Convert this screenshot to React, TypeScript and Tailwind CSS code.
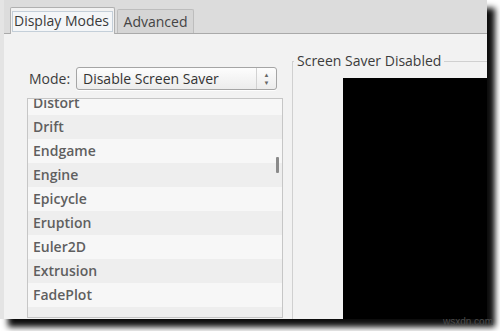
import React from 'react'

const modes = ['Distort', 'Drift', 'Endgame', 'Engine', 'Epicycle', 'Eruption', 'Euler2D', 'Extrusion', 'FadePlot', '']

const App = () => {
  return (
    <div className="relative w-[500px] h-[331px] overflow-hidden bg-white" style={{ fontFamily: '"Open Sans", "Noto Sans", sans-serif' }}>
      <div className="flex flex-col w-[487px] h-[319px] bg-[#f2f2f2] shadow-[8px_8px_6px_rgba(0,0,0,0.95)] border-l-[4px] border-l-[#e4e4e4]">
        {/* tab strip */}
        <div className="flex items-end h-[34px] shrink-0 bg-[#dcdcdc] border-b border-[#aaaaaa] pl-[6px]">
          <div className="relative -mb-px flex items-center h-[27px] w-[105px] px-[1px] bg-[#f2f2f2] border border-b-0 border-[#b0b0b0] rounded-t-[2px]">
            <div className="flex items-center h-[21px] w-full border border-[#c4cfd9] bg-[#f4f6f8] px-[1px] text-[14px] text-[#3a3a3a] leading-none">
              Display Modes
            </div>
          </div>
          <div className="flex items-center justify-center h-[24px] w-[77px] ml-[2px] bg-[#d5d5d5] border border-b-0 border-[#bdbdbd] rounded-t-[2px] text-[14px] text-[#444] leading-none">
            Advanced
          </div>
        </div>

        <div className="flex flex-1 min-h-0">
          {/* left column */}
          <div className="flex flex-col w-[283px] pl-[23px] pt-[33px]">
            <div className="flex items-center h-[23px]">
              <span className="w-[49px] pl-[2px] text-[14px] text-[#3c3c3c]">Mode:</span>
              <div className="flex h-[23px] w-[201px] border border-[#a5a5a5] rounded-[3px] bg-gradient-to-b from-[#fdfdfd] to-[#ececec] shadow-[0_1px_0_rgba(255,255,255,0.8)]">
                <span className="flex-1 pl-[6px] text-[14px] leading-[21px] text-[#333]">Disable Screen Saver</span>
                <div className="flex flex-col items-center justify-center gap-[2px] w-[20px] border-l border-[#d2d2d2] text-[6px] leading-[6px] text-[#666]">
                  <span>▲</span>
                  <span>▼</span>
                </div>
              </div>
            </div>

            <div className="relative flex-1 mt-[8px] mb-[1px] w-[256px] overflow-hidden border border-[#c6c6c6] bg-white">
              <div className="-mt-[8px]">
                {modes.map((m, i) => (
                  <div
                    key={i}
                    className={`h-[24px] pl-[5px] text-[14px] font-semibold leading-[24px] text-[#5f5f5f] ${i % 2 === 1 ? 'bg-[#eeeeee]' : 'bg-[#f7f7f7]'}`}
                  >
                    {m}
                  </div>
                ))}
              </div>
              {/* scrollbar thumb */}
              <div className="absolute right-[3px] top-[58px] w-[3px] h-[16px] bg-[#8a8a8a] rounded-[1px]" />
            </div>
          </div>

          {/* right frame */}
          <div className="flex-1 flex flex-col pl-[5px]">
            <div className="relative flex-1 mt-[27px] border-l border-t border-[#d0d0d0] pl-[50px] pt-[16px]">
              <span className="absolute -top-[11px] left-[1px] px-[3px] bg-[#f2f2f2] text-[14px] leading-[20px] text-[#3c3c3c]">
                Screen Saver Disabled
              </span>
              <div className="h-full bg-black" />
            </div>
          </div>
        </div>
      </div>
      <span className="absolute left-[443px] top-[316px] text-[10px] leading-[12px] text-[#4a4a4a]" style={{ fontFamily: '"Liberation Sans", sans-serif' }}>
        wsxdn.com
      </span>
    </div>
  )
}

export default App
